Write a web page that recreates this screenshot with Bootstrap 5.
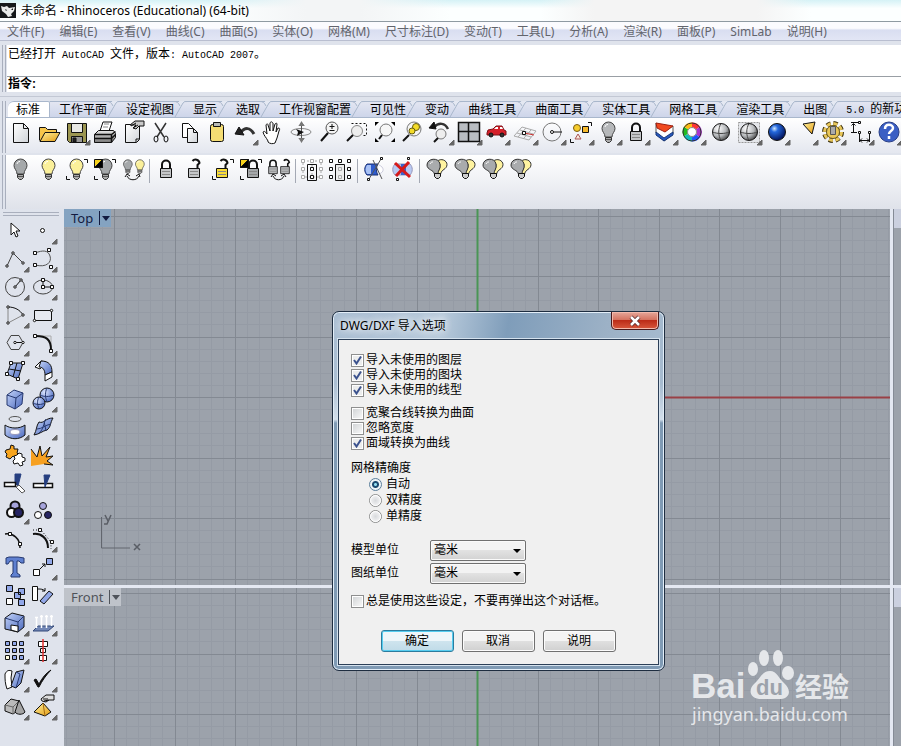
<!DOCTYPE html>
<html lang="zh-CN">
<head>
<meta charset="utf-8">
<meta name="viewport" content="width=device-width, initial-scale=1">
<title>未命名 - Rhinoceros (Educational) (64-bit)</title>
<link href="https://cdn.jsdelivr.net/npm/bootstrap@5.3.0/dist/css/bootstrap.min.css" rel="stylesheet">
<style>
  body { font: 12px/15px "Liberation Sans", "Noto Sans CJK SC", sans-serif; color: #000; background: #dfe3ec; }
  .ui-face { font-family: "Noto Sans", "Noto Sans CJK SC", sans-serif; }
  .half { font-family: "Liberation Mono", monospace; font-size: 10px; }
  .title-strip { height: 22px; background: linear-gradient(90deg, #fff0 0 24%, #f3f5f6 34% 40%, #fff0 50% 60%, #f4f4f4 66% 84%, #fff0 90%), linear-gradient(#d5f2f6, #fcffff 40%); border-bottom: 1px solid #8f9aa2; }
  .menu-strip { height: 19px; gap: 15px; padding-left: 7px; background: linear-gradient(#fbfbfe 0 35%, #d9def1 45%, #e2e6f5); border-bottom: 1px solid #b9bed0; }
  .menu-strip a { color: #62646c; text-decoration: none; }
  .grip-v { width: 4px; border: solid #a9afbd; border-width: 0 1px; margin: 0 1px 0 2px; flex: none; }
  .grip-h { height: 4px; border: solid #a9afbd; border-width: 1px 0; }
  .command { padding-top: 4px; height: 51px; }
  .history { height: 32px; border-bottom: 1px solid #999fa5; background: #fff; padding: 2px 0 0 1px; }
  .prompt-row { height: 15px; background: #fff; padding-left: 1px; }
  .prompt-row input { font: inherit; border: 0; outline: 0; min-width: 0; height: 13px; padding: 0; }
  .tabs { height: 17px; border-bottom: 1px solid #a9b7cc; background: #e0e4ee; padding-left: 2px; }
  .tabs button { font: inherit; height: 17px; border: 0; padding: 0 10px 0 9px; background: linear-gradient(#e3e6f2, #ccd4e9); border-top: 1px solid #a9b7cc; white-space: nowrap; position: relative; flex: none; color: #000; }
  .tabs button svg { position: absolute; left: -12px; top: -1px; width: 17px; height: 16px; }
  .tabs .active { background: #fff; padding: 0 9px 0 8px; border-right: 1px solid #a9b7cc; border-radius: 6px 2px 0 0; }
  .bar-one { height: 35px; background: linear-gradient(#fff, #e4e7ef); }
  .bar-two { height: 54px; background: linear-gradient(#fff, #dfe2ea); }
  .bars { padding-top: 4px; border-top: 1px solid #c3c8d4; }
  .bar-gap { margin-top: 2px; }
  .tool { width: 28px; height: 28px; padding: 0; border: 0; background: none; flex: none; display: block; }
  .tool svg { display: block; width: 28px; height: 28px; fill: none; stroke: #111; stroke-width: 1; overflow: visible; }
  .rule-v { width: 1px; height: 24px; background: #a4a9b4; margin: 0 2px 0 3px; flex: none; }
  .palette { width: 64px; padding: 3px 4px 0 1px; flex: none; }
  .palette .grip-h { margin: 0 1px 1px 2px; }
  .views { background: #e4e8f2; gap: 3px; }
  .view { background: #9ca2ab; position: relative; overflow: hidden; min-height: 0; }
  .view > svg.field { position: absolute; width: 100%; height: 100%; }
  .col-main { flex: 1 1 0; gap: 3px; min-width: 0; }
  .col-side { flex: 0 0 8px; gap: 3px; }
  .upper { flex: 376 1 0; }
  .lower { flex: 158 1 0; }
  .col-side .view { background: linear-gradient(#cbd0df 19px, #9ca2ab 0); box-shadow: inset 1px 0 0 #858b96; }
  .view-name { position: relative; height: 18px; border: 0; padding: 0 3px 0 7px; background: #84a3c1; color: #131b40; font-size: 13px; gap: 6px; }
  .view-name.idle { background: #bfc3ca; color: #4f535a; }
  .view-name i { border-left: 1px solid currentColor; height: 14px; width: 9px; }
  .view-name i::after { content: ""; display: block; border: solid transparent; border-width: 5px 4px 0; border-top-color: currentColor; margin: 5px 0 0 2px; }
  .ucs { position: absolute; left: 36px; bottom: 34px; }
  .brand { position: absolute; right: 35px; bottom: 17px; }
  .dlg { position: absolute; left: 332px; top: 102px; width: 333px; border: 1px solid #1e2d40; border-radius: 7px; padding: 0 5px 5px; background: linear-gradient(#fff0 0 20%, #d3dfeb 30%, #7f9ab4 31%, #7f9ab4 100%), linear-gradient(100deg, #a9bdd2 0, #b8cadb 28%, #7f9dba 45%, #9cb1c6 70%, #aec2d6); background-color: #9bb2c9; box-shadow: inset 0 0 0 1px #e3eef8; }
  .dlg-head { height: 27px; padding-left: 2px; }
  .dlg-head h1 { font-size: 12px; line-height: 15px; margin: 0; padding-right: 6px; text-shadow: 0 0 8px #fff, 0 0 8px #fff; }
  .shut { align-self: flex-start; width: 48px; height: 18px; padding: 0; border: 1px solid #4a1a1c; border-top: 0; border-radius: 0 0 5px 5px; background: linear-gradient(#e5a79a, #d4705d 48%, #bc2c18 50%, #d8583d); box-shadow: inset 0 0 0 1px #f3b9ab; line-height: 0; }
  .dlg-body { background: #f0f0f0; border: 1px solid #2c3f57; outline: 1px solid #d5e2ee; padding: 13px 13px 12px 12px; }
  .dlg-body fieldset { padding-top: 2px; margin-bottom: 16px; }
  .opt { height: 15px; gap: 2px; }
  .opt.pick { height: 16px; gap: 4px; padding-left: 18px; }
  .opt.remember { margin: 10px 0 21px; }
  .dlg .form-check-input { margin: 0; width: 13px; height: 13px; flex: none; box-shadow: none; border: 1px solid #8e8f8f; background-color: #eceded; background-size: contain; outline: 1px solid #fff; outline-offset: -2px; }
  .dlg .form-check-input[type=checkbox] { border-radius: 0; background-image: linear-gradient(135deg, #cfd2d4, #fbfbfb); }
  .dlg .form-check-input[type=checkbox]:checked { background-image: url("data:image/svg+xml,%3Csvg xmlns='http://www.w3.org/2000/svg' viewBox='0 0 11 11'%3E%3Cpath d='M2 5l2.500 3.500L9 1.500' fill='none' stroke='%233b528e' stroke-width='2'/%3E%3C/svg%3E"); }
  .dlg .form-check-input[type=radio] { background-image: radial-gradient(#d8dadd, #fff); }
  .dlg .form-check-input[type=radio]:checked { outline: 0; background-image: radial-gradient(circle, #8fdcf0 0 1px, #1b4a71 2px 3px, #eef4f8 4px); border-color: #5b7f9c; }
  .unit { gap: 31px; margin-bottom: 2px; }
  .dlg .form-select { width: 96px; height: 21px; font: inherit; padding: 0 16px 0 3px; border: 1px solid #707070; border-radius: 2px; color: #000; background: url("data:image/svg+xml,%3Csvg xmlns='http://www.w3.org/2000/svg' width='8' height='4'%3E%3Cpath d='M0 0h8L4 4z'/%3E%3C/svg%3E") no-repeat right 4px center / 8px 4px, linear-gradient(#f3f3f3 0 48%, #e2e2e2 50%, #d2d2d2); box-shadow: inset 0 0 0 1px #fafafa; }
  .push { width: 73px; height: 22px; font: inherit; padding: 0; color: #000; border: 1px solid #707070; border-radius: 3px; background: linear-gradient(#f4f4f4 0 48%, #e0e0e0 50%, #d0d0d0); box-shadow: inset 0 0 0 1px #fcfcfc; }
  .push.main { border-color: #2c7c9e; background: linear-gradient(#eef6fa 0 48%, #cfe4ee 50%, #c0dbe8); box-shadow: inset 0 0 0 1px #56cdf0; }
</style>
<script src="https://cdn.jsdelivr.net/npm/bootstrap@5.3.0/dist/js/bootstrap.bundle.min.js"></script>
</head>
<body class="d-flex flex-column vh-100 overflow-hidden">

<svg width="0" height="0" class="position-absolute" aria-hidden="true">
  <defs>
    <linearGradient id="gPage" x2="1" y2="1"><stop stop-color="#fff"/><stop offset="1" stop-color="#cfd3d8"/></linearGradient>
    <linearGradient id="gGold" x2="1" y2="1"><stop stop-color="#fff3a0"/><stop offset="1" stop-color="#e39a10"/></linearGradient>
    <linearGradient id="gBlue" x2="1" y2="1"><stop stop-color="#c5d5fa"/><stop offset="1" stop-color="#4a68bd"/></linearGradient>
    <linearGradient id="gSteel" x2="0" y2="1"><stop stop-color="#e8e8e8"/><stop offset="1" stop-color="#777"/></linearGradient>
    <radialGradient id="gBall" cx=".35" cy=".3" r=".8"><stop stop-color="#fff"/><stop offset=".55" stop-color="#b5b8bb"/><stop offset="1" stop-color="#333"/></radialGradient>
    <radialGradient id="gSea" cx=".35" cy=".3" r=".7"><stop stop-color="#cfe8ff"/><stop offset=".3" stop-color="#2468dd"/><stop offset="1" stop-color="#041660"/></radialGradient>
    <radialGradient id="gSky" cx=".35" cy=".3" r=".75"><stop stop-color="#dfe8ff"/><stop offset="1" stop-color="#4868c0"/></radialGradient>
    <symbol id="more" viewBox="0 0 28 28" overflow="visible"><path d="M28 22v5h-5z" fill="#666" stroke="#666"/></symbol>
    <symbol id="bulb" viewBox="0 0 28 28"><path d="M11 19C11 15 8 14 8 10.500a6.500 6.500 0 0 1 13 0C21 14 18 15 18 19z" stroke="#444"/><path d="M11.500 19.500h6v3l-2 2h-2l-2-2z" fill="#aaa" stroke="#333"/><path d="M12 21.500h5" stroke="#555"/><path d="M11 9c.5-2 1.500-2.500 3-2.500" stroke="#fff" fill="none"/></symbol>
    <symbol id="lock" viewBox="0 0 28 28"><path d="M10 14V9.500a4 4 0 0 1 8 0V14" fill="none" stroke-width="2"/><path d="M8.500 13.500h11v9h-11z"/><path d="M10 16.500h8M10 19.500h8" stroke="#888"/></symbol>
    <symbol id="unlock" viewBox="0 0 28 28"><path d="M17.500 14V10l2-2a4 4 0 0 0-7-2" fill="none" stroke-width="2"/><path d="M8.500 13.500h11v9h-11z"/><path d="M10 16.500h8M10 19.500h8" stroke="#888"/></symbol>
    <symbol id="brackets" viewBox="0 0 28 28"><path d="M22 4.500h3.500V8M4.500 21v3.500H8"/></symbol>
    <symbol id="half" viewBox="0 0 28 28"><path d="M4.500 4.500h8v8h-8z" fill="#f7d21c"/><path d="M12.500 4.500v8h-8z" fill="#000"/></symbol>
    <symbol id="duo" viewBox="0 0 28 28"><path d="M15 18.500c1-3 3-3 3-9l-3-3c4-4 10-1 10 3 0 5-6 5-6 9z" fill="#fff3a0" stroke="#333"/><path d="M12 18.500C12 15 5 15 5 10c0-7 12-8 13-1 1 5-2 6-2 9.500z" fill="#a9abad" stroke="#333"/><path d="M12.500 18.500h6v3l-2 2h-2l-2-2z" fill="#ccc"/><path d="M8 9c1-2 2-2 3-2" stroke="#fff"/></symbol>
    <symbol id="slash" viewBox="0 0 17 16"><path d="M7 0h8Q12 0 11 2L8 8z" fill="#e4e8f2"/><path d="M3 16L11 2Q12 0 16 .5M1 .5Q6 0 8 5" fill="none" stroke="#a9b7cc"/></symbol>
    <pattern id="mesh" width="121" height="121" patternUnits="userSpaceOnUse">
      <path fill="none" stroke="#959ba5" d="M12.500 0v121M24.500 0v121M36.500 0v121M48.500 0v121M73.500 0v121M85.500 0v121M97.500 0v121M109.500 0v121M0 12.500h121M0 24.500h121M0 36.500h121M0 48.500h121M0 73.500h121M0 85.500h121M0 97.500h121M0 109.500h121"/>
      <path fill="none" stroke="#838992" d="M.5 0v121M61.500 0v121M0 .5h121M0 61.500h121"/>
    </pattern>
  </defs>
</svg>

<header>
  <div class="title-strip ui-face d-flex align-items-center gap-1">
    <svg width="17" height="17" viewBox="0 0 17 17" aria-hidden="true"><path fill="#15191b" d="M0 1h16v15H0z"/><path fill="#e9eceb" d="M1 4l3 1 3-1 2 2 6-1-1 4-3 3 1 2-4 1-2-3-4-3z"/><path fill="#15191b" d="M5 7l2 1-1 1zM11 8l2-2v2z"/></svg>
    <span>未命名 - Rhinoceros (Educational) (64-bit)</span>
  </div>
  <nav class="menu-strip ui-face d-flex align-items-center text-nowrap overflow-hidden">
    <a href="#">文件(F)</a><a href="#">编辑(E)</a><a href="#">查看(V)</a><a href="#">曲线(C)</a><a href="#">曲面(S)</a><a href="#">实体(O)</a><a href="#">网格(M)</a><a href="#">尺寸标注(D)</a><a href="#">变动(T)</a><a href="#">工具(L)</a><a href="#">分析(A)</a><a href="#">渲染(R)</a><a href="#">面板(P)</a><a href="#">SimLab</a><a href="#">说明(H)</a>
  </nav>
</header>

<section class="command d-flex">
  <div class="grip-v"></div>
  <div class="flex-grow-1">
    <div class="history">已经打开<span class="half"> AutoCAD </span>文件，版本<span class="half">: AutoCAD 2007</span>。</div>
    <div class="prompt-row d-flex align-items-center"><label for="cmd" class="fw-bold">指令:</label><input id="cmd" class="flex-grow-1" type="text"></div>
  </div>
</section>

<section class="bars mt-1">
  <div class="d-flex overflow-hidden">
    <div class="grip-v me-0"></div>
    <div class="flex-grow-1 overflow-hidden">
      <div class="tabs d-flex overflow-hidden">
        <button class="active" type="button">标准</button>
        <button type="button">工作平面</button>
        <button type="button"><svg><use href="#slash"/></svg>设定视图</button>
        <button type="button"><svg><use href="#slash"/></svg>显示</button>
        <button type="button"><svg><use href="#slash"/></svg>选取</button>
        <button type="button"><svg><use href="#slash"/></svg>工作视窗配置</button>
        <button type="button"><svg><use href="#slash"/></svg>可见性</button>
        <button type="button"><svg><use href="#slash"/></svg>变动</button>
        <button type="button"><svg><use href="#slash"/></svg>曲线工具</button>
        <button type="button"><svg><use href="#slash"/></svg>曲面工具</button>
        <button type="button"><svg><use href="#slash"/></svg>实体工具</button>
        <button type="button"><svg><use href="#slash"/></svg>网格工具</button>
        <button type="button"><svg><use href="#slash"/></svg>渲染工具</button>
        <button type="button"><svg><use href="#slash"/></svg>出图</button>
        <button type="button"><svg><use href="#slash"/></svg><span class="half">5.0 </span>的新功能</button>
      </div>
      <div class="bar-one d-flex overflow-hidden">
        <button class="tool" aria-label="新建"><svg><path d="M7.500 5.500h10l5 5v14h-15z" fill="url(#gPage)"/><path d="M17.500 5.500v5h5"/></svg></button>
        <button class="tool" aria-label="打开"><svg><path d="M5.500 22.500v-13h6l2 2h9v3" fill="#f7c64a"/><path d="M6 23.500l5-9h15l-5 9z" fill="url(#gGold)"/></svg></button>
        <button class="tool" aria-label="保存"><svg><path d="M5.500 5.500h19v19h-17l-2-2z" fill="#9c9651"/><path d="M9.500 5.500h11v9h-11z" fill="#e8e8e4"/><path d="M9.500 18.500h11v6h-11z" fill="#999"/><path d="M11 20h3v4h-3z" fill="#222"/><use href="#more"/></svg></button>
        <button class="tool" aria-label="打印"><svg><path d="M10 13l3-9h9l-3 9z" fill="#fff"/><path d="M4.500 16.500l4-4h15l2 3v4l-4 5h-17z" fill="url(#gSteel)"/><path d="M4.500 16.500h17l4-3M4.500 20.500h17l4-4M21.500 16.500v8" stroke-width="1.500"/><path d="M14 6h5M13 9h5" stroke="#888"/></svg></button>
        <button class="tool" aria-label="文件属性"><svg><path d="M7.500 6.500h14v15l-3 3h-11z" fill="url(#gPage)"/><path d="M21 21h-3v3"/><path d="M12 7l5-4h9v5h-5l-3 3-3-1 3-3z" fill="#c9c9c9"/><path d="M13 8l5-3M15 10l5-3"/></svg></button>
        <button class="tool" aria-label="剪切"><svg><path d="M9 5l9 14M20 5l-9 14" stroke="#333" stroke-width="1.500"/><ellipse cx="10" cy="21" rx="2" ry="3"/><ellipse cx="20" cy="21" rx="2" ry="3"/></svg></button>
        <button class="tool" aria-label="复制"><svg><path d="M8.500 5.500h6l4 4v10h-10z" fill="#fff"/><path d="M13.500 10.500h6l4 4v10h-10z" fill="url(#gPage)"/><path d="M19.500 10.500v4h4"/></svg></button>
        <button class="tool" aria-label="粘贴"><svg><rect x="8.500" y="6.500" width="13" height="17" rx="2" fill="#f5dd73"/><path d="M11.500 4.500h7v4h-7z" fill="#b9bbb6"/></svg></button>
        <button class="tool" aria-label="撤销"><svg><path d="M10 15c5-6 10-6 14 1" stroke="#333" stroke-width="3"/><path d="M5 16l4-7 5 8z" fill="#222"/><use href="#more"/></svg></button>
        <button class="tool" aria-label="平移"><svg><path d="M10 23c-2-4-4-5-5-9 1-1 2-1 4 2L8 7c1-2 2-1 2 0l2 6V5c1-2 2-1 3 0v8l2-7c1-1 2-1 2 0l-1 8 2-4c2 0 2 1 1 3l-2 7-2 5c-2 1-5 1-7-1z" fill="#fff"/></svg></button>
        <button class="tool" aria-label="旋转视图"><svg><ellipse cx="15" cy="14" rx="10" ry="3.500" stroke="#888"/><path d="M13 8c2-3 4-3 5 0M13 20c2 3 4 3 5 0M15.500 6v16" stroke="#555"/><path d="M15.500 3l-3 5h6zM15.500 25l-3-5h6z" fill="#777" stroke="none"/><path d="M10 11l8 3-7 4 1-4z" fill="#111" stroke="none"/></svg></button>
        <button class="tool" aria-label="动态缩放"><svg><circle cx="18" cy="10" r="6" fill="#f4f4f4" stroke="#555"/><path d="M14 15l-7 8" stroke-width="2"/><path d="M15.500 8.500h5M18 6v5M15.500 12.500h5"/></svg></button>
        <button class="tool" aria-label="框选缩放"><svg><path d="M9.500 5.500h15v12h-4" stroke-dasharray="2 2"/><circle cx="15" cy="13" r="5.500" fill="#eee" stroke="#888"/><path d="M11 17l-6 6" stroke-width="2"/></svg></button>
        <button class="tool" aria-label="缩放至最大范围"><svg><circle cx="16" cy="12" r="6" fill="#f7f7f7" stroke="#777"/><path d="M12 17l-3 4" stroke-width="2"/><path d="M5 4h4L5 8zM25 4h-4l4 4zM5 24h4l-4-4zM25 24h-4l4-4z" fill="#000" stroke="none"/></svg></button>
        <button class="tool" aria-label="缩放至选取物件"><svg><circle cx="16" cy="11" r="7" fill="#f4f4f4" stroke="#777"/><circle cx="18" cy="9" r="3.500" fill="#f4dc28" stroke="#665c10"/><circle cx="14" cy="13" r="3" fill="#f4dc28" stroke="#665c10"/><path d="M11 17l-6 6" stroke-width="2"/></svg></button>
        <button class="tool" aria-label="复原视图"><svg><path d="M8 9c5-5 11-4 14 2" stroke="#333" stroke-width="2.500"/><path d="M3 10l5-6 2 7z" fill="#111"/><circle cx="15" cy="16" r="5" fill="#eee" stroke="#777"/><path d="M12 20l-4 4" stroke-width="2"/><use href="#more"/></svg></button>
        <button class="tool" aria-label="四个视窗"><svg><path d="M4.500 4.500h21v19h-21z" fill="#b9bdc2" stroke-width="1.500"/><path d="M14.500 5v18M5 13.500h20" stroke-width="1.500"/><use href="#more"/></svg></button>
        <button class="tool" aria-label="车辆视图"><svg><path d="M5 15l1-3 5-1 3-3h6l2 4 2 1v4H5z" fill="#d5202a" stroke="#801016"/><path d="M12 11l2-2h2v2zM18 9h2l1 2h-3z" fill="#fff" stroke="none"/><circle cx="9" cy="17" r="2" fill="#333"/><circle cx="20" cy="17" r="2" fill="#333"/><use href="#more"/></svg></button>
        <button class="tool" aria-label="工作平面"><svg><path d="M4 18l8-9 14 4-7 9zM7 15l14 4M10 12l13 4M16 10l-8 9M21 12l-7 8" stroke="#aaa"/><path d="M14 15l10 2" stroke="#c33"/><path d="M12.500 13.500h3v3h-3z" fill="#fff"/><use href="#more"/></svg></button>
        <button class="tool" aria-label="圆"><svg><circle cx="14" cy="14" r="9" stroke="#777"/><path d="M14 14h10"/><circle cx="14" cy="14" r="1.500" fill="#fff"/><use href="#more"/></svg></button>
        <button class="tool" aria-label="选取"><svg><use href="#brackets"/><circle cx="11" cy="10" r="3.500" fill="#f6cc2c" stroke="#7a5c10"/><path d="M16.500 8.500h6v6h-6z" fill="#f6b92c"/><path d="M12 16l3 5H9z" stroke="#a55" fill="#f8e8dc"/><use href="#more"/></svg></button>
        <button class="tool" aria-label="隐藏"><svg><use href="#bulb" fill="#b6b8ba"/><use href="#more"/></svg></button>
        <button class="tool" aria-label="锁定"><svg><use href="#lock" fill="#c4c6c8"/><use href="#more"/></svg></button>
        <button class="tool" aria-label="图层"><svg><path d="M6 5l9 7 8-4v8l-9 7-8-8z" fill="#fff" stroke="#555"/><path d="M6 5l17 3-8 6-8-4z" fill="#f04a20" stroke="#a02010"/><path d="M6 14l8 6 9-6v3l-9 6-8-6z" fill="#2858c0" stroke="#183878"/><use href="#more"/></svg></button>
        <button class="tool" aria-label="颜色"><svg><g stroke-width="5"><path d="M14 7a7 7 0 0 1 6 3" stroke="#f33"/><path d="M20 10a7 7 0 0 1 0 8" stroke="#a3c"/><path d="M20 18a7 7 0 0 1-6 3" stroke="#25f"/><path d="M14 21a7 7 0 0 1-6-4" stroke="#1bb"/><path d="M8 17a7 7 0 0 1 0-7" stroke="#2b2"/><path d="M8 10a7 7 0 0 1 6-3" stroke="#fb1"/></g><circle cx="14" cy="14" r="9" stroke="#333"/><circle cx="14" cy="14" r="4.500" fill="#fff" stroke="#888"/><use href="#more"/></svg></button>
        <button class="tool" aria-label="着色"><svg><circle cx="15" cy="14" r="8.500" fill="url(#gBall)"/><path d="M15 5.500c-3 5-3 12 0 17M6.500 14c5 2 12 2 17 0" stroke="#444"/></svg></button>
        <button class="tool" aria-label="着色全部"><svg><path d="M4.500 4.500h21v20h-21z" stroke="#999" stroke-dasharray="2 1" fill="#e4e6ea"/><circle cx="15" cy="14" r="8.500" fill="url(#gBall)"/><path d="M15 5.500c-3 5-3 12 0 17M6.500 14c5 2 12 2 17 0" stroke="#444"/><use href="#more"/></svg></button>
        <button class="tool" aria-label="渲染"><svg><circle cx="15" cy="14" r="8.500" fill="url(#gSea)"/><use href="#more"/></svg></button>
        <button class="tool" aria-label="灯光"><svg><path d="M13 6l12-2-3 12z" fill="url(#gGold)"/><use href="#more"/></svg></button>
        <button class="tool" aria-label="选项"><svg><circle cx="15" cy="14" r="8.500" stroke-width="5" stroke-dasharray="4 2.700" stroke="#3d3210"/><circle cx="15" cy="14" r="8.500" stroke="#e8c658" stroke-width="3" stroke-dasharray="4 2.700"/><circle cx="15" cy="14" r="6.500" fill="#e8c658" stroke="#6b5a1c"/><path d="M12.500 8.500h5v8h-5z" fill="#aaa" stroke="#555"/><use href="#more"/></svg></button>
        <button class="tool" aria-label="尺寸标注"><svg><path d="M5 4.500h8M5 14.500h6M7.500 6v8M5.500 7.500l2-2 2 2M13.500 14v10M23.500 14v10M14 22.500h9M16 20.500l-2 2 2 2M21 20.500l2 2-2 2"/><path d="M12.500 3.500h2v2h-2zM12.500 13.500h2v2h-2zM22.500 13.500h2v2h-2z" fill="#fff"/><use href="#more"/></svg></button>
        <button class="tool" aria-label="说明"><svg><circle cx="15" cy="14" r="10" fill="#3b5fc4" stroke="#2a3f86"/><path d="M11 11c0-6 8-5 8-1 0 3-4 3-4 6M15 18v3" stroke="#fff" stroke-width="2.500"/><use href="#more"/></svg></button>
      </div>
    </div>
  </div>
  <div class="bar-gap d-flex overflow-hidden">
    <div class="grip-v me-0"></div>
    <div class="bar-two d-flex flex-grow-1 overflow-hidden">
      <button class="tool" aria-label="隐藏物件"><svg><use href="#bulb" fill="#a5a8aa"/></svg></button>
      <button class="tool" aria-label="显示物件"><svg><use href="#bulb" fill="#fbf09a"/></svg></button>
      <button class="tool" aria-label="显示选取的物件"><svg><use href="#bulb" fill="#fbf09a"/><use href="#brackets"/></svg></button>
      <button class="tool" aria-label="隐藏未选取的物件"><svg><use href="#bulb" x="1" fill="#a5a8aa"/><use href="#brackets"/><use href="#half"/></svg></button>
      <button class="tool" aria-label="对调隐藏与显示"><svg><use href="#bulb" x="0" y="2" width="19" height="19" fill="#a5a8aa"/><use href="#bulb" x="12" y="2" width="19" height="19" fill="#fbf09a"/><path d="M9 21c2 5 10 5 12 0M7 22l2-3 3 2M18 21l3-2 1 3"/></svg></button>
      <div class="rule-v mt-1"></div>
      <button class="tool" aria-label="锁定物件"><svg><use href="#lock" fill="#c4c6c8"/></svg></button>
      <button class="tool" aria-label="解除锁定"><svg><use href="#unlock" fill="#c4c6c8"/></svg></button>
      <button class="tool" aria-label="解除选取锁定"><svg><use href="#unlock" fill="#f8dc38"/><use href="#brackets"/></svg></button>
      <button class="tool" aria-label="锁定未选取的物件"><svg><use href="#lock" x="3" fill="#a5a8aa"/><use href="#brackets"/><use href="#half"/></svg></button>
      <button class="tool" aria-label="对调锁定"><svg><use href="#lock" x="-2" y="1" width="22" height="22" fill="#b8babc"/><use href="#unlock" x="10" y="1" width="22" height="22" fill="#b8babc"/><path d="M9 21c2 5 9 5 11 0M7 22l2-3 3 2M17 21l3-2 2 3"/></svg></button>
      <div class="rule-v mt-1"></div>
      <button class="tool" aria-label="显示控制点"><svg><path d="M5 6h18v16H5zM14 6v16" stroke="#aaa" stroke-dasharray="2 2"/><path d="M3.500 4.500h3v3h-3zM12.500 4.500h3v3h-3zM21.500 4.500h3v3h-3zM3.500 20.500h3v3h-3zM21.500 20.500h3v3h-3zM3.500 12.500h3v3h-3zM21.500 12.500h3v3h-3z" stroke="#aaa" fill="#fff"/><path d="M9.500 9.500h9v16h-9z"/><path d="M12.500 12.500h3v3h-3zM12.500 20.500h3v3h-3z" fill="#fff"/></svg></button>
      <button class="tool" aria-label="隐藏控制点"><svg><path d="M9.500 9.500h9v16h-9z" fill="#eee"/><path d="M12.500 12.500h3v3h-3zM12.500 20.500h3v3h-3z" stroke="#aaa"/><path d="M3.500 4.500h3v3h-3zM12.500 4.500h3v3h-3zM21.500 4.500h3v3h-3zM3.500 20.500h3v3h-3zM21.500 20.500h3v3h-3zM3.500 12.500h3v3h-3zM21.500 12.500h3v3h-3z" fill="#fff"/></svg></button>
      <div class="rule-v mt-1"></div>
      <button class="tool" aria-label="显示边缘"><svg><path d="M7 9h11c-2 3-2 8 0 11H7c-3-3-3-8 0-11z" fill="#2f5ccc" stroke="#1a2f70"/><path d="M7 10h4v9H7c-2-3-2-6 0-9z" fill="#a9c2f5" stroke="none"/><path d="M19 10c5 2 6 7 0 9" fill="#fff" stroke="#ccd"/><path d="M21 4L9 24M13 5l9 19" stroke="#555"/><path d="M20.500 2.500h2v2h-2zM7.500 23.500h2v2h-2z" fill="#fff"/></svg></button>
      <button class="tool" aria-label="隐藏边缘"><svg><path d="M7 9h15c3 3 3 8 0 11H7c-3-3-3-8 0-11z" fill="#b9caf3" stroke="#99b"/><path d="M13 9h5v11h-5z" fill="#3a62cc" stroke="none"/><path d="M7 8l15 14M21 7L8 21" stroke="#d61a1a" stroke-width="3"/><path d="M19.500 2.500h2v2h-2zM8.500 23.500h2v2h-2z" fill="#fff"/></svg></button>
      <div class="rule-v mt-1"></div>
      <button class="tool" aria-label="隐藏点"><svg><use href="#duo"/></svg></button>
      <button class="tool" aria-label="显示点"><svg><use href="#duo"/></svg></button>
      <button class="tool" aria-label="隐藏曲线"><svg><use href="#duo"/></svg></button>
      <button class="tool" aria-label="隐藏曲面"><svg><use href="#duo"/></svg></button>
    </div>
  </div>
</section>

<main class="d-flex flex-grow-1 position-relative overflow-hidden">
  <aside class="palette">
    <div class="grip-h"></div>
    <div class="d-flex flex-wrap">
      <button class="tool" aria-label="选取"><svg><path d="M10 6v12l3-3 2 5 2-1-2-5h4z" fill="#fff"/></svg></button>
      <button class="tool" aria-label="点"><svg><circle cx="13.500" cy="13.500" r="2" fill="#fff"/><use href="#more"/></svg></button>
      <button class="tool" aria-label="多重直线"><svg><path d="M6 21l6-13 10 10" stroke="#444"/><g fill="#fff"><circle cx="6" cy="21" r="1.200"/><circle cx="12" cy="8" r="1.200"/><circle cx="22" cy="18" r="1.200"/></g><use href="#more"/></svg></button>
      <button class="tool" aria-label="曲线"><svg><path d="M6 8c8-3 13-3 15 3s-3 12-15 9" stroke="#555"/><path d="M4.500 6.500h3v3h-3zM18.500 3.500h3v3h-3zM4.500 18.500h3v3h-3zM20.500 20.500h3v3h-3z" fill="#fff"/><use href="#more"/></svg></button>
      <button class="tool" aria-label="圆"><svg><circle cx="14" cy="14" r="9.500" stroke="#444"/><path d="M14 14l6-7"/><g fill="#fff"><circle cx="14" cy="14" r="1.200"/><circle cx="20" cy="7" r="1.200"/></g><use href="#more"/></svg></button>
      <button class="tool" aria-label="椭圆"><svg><ellipse cx="14" cy="14" rx="9.500" ry="7" stroke="#444"/><path d="M14 7v7h9"/><path d="M12.500 5.500h3v3h-3zM12.500 12.500h3v3h-3zM21.500 12.500h3v3h-3z" fill="#fff"/><use href="#more"/></svg></button>
      <button class="tool" aria-label="圆弧"><svg><path d="M7 6v16l15-8" stroke="#888"/><path d="M7 6c7 0 12 3 15 8"/><g fill="#fff"><circle cx="7" cy="6" r="1.200"/><circle cx="7" cy="22" r="1.200"/><circle cx="22" cy="14" r="1.200"/></g><use href="#more"/></svg></button>
      <button class="tool" aria-label="矩形"><svg><path d="M5.500 9.500h17v10h-17z" fill="#e6e9f0"/><g fill="#fff"><circle cx="22.500" cy="9.500" r="1.200"/><circle cx="5.500" cy="19.500" r="1.200"/></g><use href="#more"/></svg></button>
      <button class="tool" aria-label="多边形"><svg><path d="M6 13.500l4-7h8l4 7-4 7h-8z" stroke="#444"/><path d="M14 13.500h8"/><g fill="#fff"><circle cx="14" cy="13.500" r="1.200"/><circle cx="22" cy="13.500" r="1.200"/></g><use href="#more"/></svg></button>
      <button class="tool" aria-label="曲线圆角"><svg><path d="M7 7h15v14" stroke="#aaa"/><path d="M7 7c10 0 15 3 15 14" stroke-width="2"/><path d="M4.500 5.500h3v3h-3zM20.500 20.500h3v3h-3z" fill="#fff"/><use href="#more"/></svg></button>
      <button class="tool" aria-label="曲面"><svg><path d="M10 6h12l-5 16-11-5z" fill="url(#gBlue)"/><path d="M16 6l-4 14M8 12l12 2"/><path d="M8.500 4.500h3v3h-3zM20.500 4.500h3v3h-3zM15.500 20.500h3v3h-3zM4.500 15.500h3v3h-3z" fill="#fff"/><use href="#more"/></svg></button>
      <button class="tool" aria-label="扫掠"><svg><path d="M6 10l6-6 5 1-6 7z" fill="#fff"/><path d="M12 4c8 0 11 4 11 11l-7 3c0-5-2-8-6-8z" fill="url(#gBlue)"/><path d="M16 18l7-3v5l-7 4z" fill="#fff"/><use href="#more"/></svg></button>
      <button class="tool" aria-label="立方体"><svg><path d="M6 10l7-5 9 3-1 11-7 5-8-4z" fill="url(#gBlue)" stroke="#26386f"/><path d="M6 10l9 3 7-5M15 13l-1 11" stroke="#26386f"/><use href="#more"/></svg></button>
      <button class="tool" aria-label="布尔运算"><svg><circle cx="18" cy="10" r="7" fill="url(#gSky)"/><circle cx="10" cy="18" r="6" fill="url(#gSky)"/><path d="M18 3c-2 4-2 9 0 14M11 10c4 2 9 2 14 0M10 12c-2 4-2 7 0 12M4 18c4 2 8 2 12 0" stroke="#26386f"/><use href="#more"/></svg></button>
      <button class="tool" aria-label="投影"><svg><ellipse cx="14" cy="6" rx="6" ry="2.500" stroke="#555"/><path d="M4 12c5 4 15 4 20 0v10c-6 5-14 5-20 0z" fill="url(#gBlue)"/><ellipse cx="14" cy="19" rx="5" ry="2.500" fill="#fff" stroke="#99b"/><use href="#more"/></svg></button>
      <button class="tool" aria-label="曲面工具"><svg><path d="M10 9c5 2 6-4 14-4-3 5-2 9-6 12-5 1-7 4-13 5 3-5 2-9 5-13z" fill="url(#gBlue)"/><path d="M17 6c-3 5-2 10-7 14M8 16c5 0 8-4 14-5M15 8l2 10" stroke="#26386f"/><use href="#more"/></svg></button>
      <button class="tool" aria-label="组合"><svg><path d="M5 9l4-1 1-4 3 1v3h4l-1 4 2 2-3 3-3-2-3 3-4-2 1-3-2-2z" fill="#f8a51e"/><path d="M13 15l3-1 2-2 3 1v3l3 1v3l-3 1 1 3-3 1-2-3-4 1-1-3 2-2z" fill="#fff"/></svg></button>
      <button class="tool" aria-label="炸开"><svg><path d="M2 25V8l6 8 3-11 2 10 8-9-4 10 7-1-6 5 6 4-9-1z" fill="#f6a021" stroke="none"/><path d="M2 8l6 8 3-11 2 10 8-9-4 10 7-1-6 5 6 4-9-1"/></svg></button>
      <button class="tool" aria-label="修剪"><svg><path d="M14 5h6l-3 12-3-3z" fill="#263f80" stroke="#263f80"/><path d="M3.500 13.500h11v4h-11z" fill="#fff" stroke-width="1.500"/><path d="M15 18l3-2 6 6-3 2z" fill="#fff" stroke="#555"/></svg></button>
      <button class="tool" aria-label="分割"><svg><path d="M4.500 14.500h19v4h-19z" fill="#fff" stroke-width="1.500"/><path d="M15 6h6l-5 12z" fill="#263f80" stroke="#263f80"/></svg></button>
      <button class="tool" aria-label="群组"><svg><circle cx="14" cy="9" r="4.500" fill="#a6a4db" stroke-width="2"/><circle cx="10.500" cy="15.500" r="4.500" fill="#fff" stroke-width="2"/><circle cx="17.500" cy="15.500" r="4.500" fill="#262563" stroke-width="2"/><use href="#more"/></svg></button>
      <button class="tool" aria-label="解散群组"><svg><circle cx="14" cy="9" r="3.500" fill="#a6a4db"/><circle cx="9" cy="18" r="3.500" fill="#fff"/><circle cx="19" cy="18" r="3.500" fill="#262563"/></svg></button>
      <button class="tool" aria-label="编辑点"><svg><path d="M4 9c8-1 15 4 15 14" stroke-width="1.500"/><path d="M7.500 7.500h3v3h-3zM17.500 17.500h3v3h-3z" fill="#fff"/></svg></button>
      <button class="tool" aria-label="控制点"><svg><path d="M4 9c8-1 15 4 15 14" stroke-width="2"/><path d="M4 5h8l10 12v7" stroke-dasharray="1 2"/><path d="M9.500 3.500h3v3h-3zM21.500 15.500h3v3h-3z" fill="#fff"/><use href="#more"/></svg></button>
      <button class="tool" aria-label="文字"><svg><path d="M5 5l3-1h9l6 1v5h-3l-2-2h-2v12l3 2v2h-9v-2l2-2V8H9l-2 3H5z" fill="#5f80d0" stroke="#26386f"/></svg></button>
      <button class="tool" aria-label="移动"><svg><path d="M4.500 16.500h6v6h-6z" fill="#fff"/><path d="M17.500 5.500h6v6h-6z" fill="#91a7e8"/><path d="M11 16l5-5M13 11h3v3"/><use href="#more"/></svg></button>
      <button class="tool" aria-label="复制物件"><svg><path d="M5.500 4.500h6v6h-6zM17.500 7.500h6v6h-6zM13.500 11.500h6v6h-6zM17.500 18.500h6v6h-6z" fill="#91a7e8"/><path d="M5.500 17.500h6v6h-6z" fill="#fff"/></svg></button>
      <button class="tool" aria-label="旋转"><svg><path d="M3.500 5.500h5v14h-5z" fill="#fff"/><path d="M11 20l9-10 4 3-9 10z" fill="#91a7e8"/><path d="M9 8c3 0 5 0 7 2M16 7v3h-3"/></svg></button>
      <button class="tool" aria-label="实体编辑"><svg><path d="M4 9l7-5 12 3v11l-6 5-13-3z" fill="url(#gBlue)"/><path d="M4 9l13 4 6-6M17 13v10" stroke="#26386f"/><path d="M10 16l7 1v6l-7-2z" fill="#fff"/><use href="#more"/></svg></button>
      <button class="tool" aria-label="法线方向"><svg><path d="M4 22l5-5h16l-6 5z" fill="#7186b5" stroke="#334878"/><path d="M7.500 19V8M12.500 19V6M17.500 19V6M22.500 17V6M6 8.500h3M11 7.500h3M16 7.500h3M21 7.500h3" stroke="#fff" stroke-width="1.500"/><use href="#more"/></svg></button>
      <button class="tool" aria-label="阵列"><svg><path d="M4.500 4.500h4v4h-4zM11.500 4.500h4v4h-4zM18.500 4.500h4v4h-4zM4.500 11.500h4v4h-4zM11.500 11.500h4v4h-4zM18.500 11.500h4v4h-4zM11.500 18.500h4v4h-4zM18.500 18.500h4v4h-4z" fill="#91a7e8"/><path d="M4.500 18.500h4v4h-4z" fill="#fffde0"/><use href="#more"/></svg></button>
      <button class="tool" aria-label="对齐"><svg><path d="M9.500 4.500h9v5h-9zM11.500 11.500h5v4h-5zM10.500 18.500h7v5h-7z" fill="#fff"/><path d="M14 2v23" stroke="#e03030" stroke-width="1.500"/><use href="#more"/></svg></button>
      <button class="tool" aria-label="弯曲"><svg><path d="M4 9c2-4 4-4 7-3l-1 7 1 9-5 2c-2-6-2-9-2-15z" fill="#fff"/><path d="M15 7l8-2-3 13-5 5-5-2z" fill="url(#gBlue)"/><path d="M15 7l4 2-4 14" stroke="#26386f"/><use href="#more"/></svg></button>
      <button class="tool" aria-label="检查"><svg><path d="M5 15l2-1 3 5C13 13 17 8 22 5 17 10 13 16 10 22H9z" fill="#111"/><use href="#more"/></svg></button>
      <button class="tool" aria-label="网格"><svg><path d="M4 12l6-6 8 2v9l-6 4-8-3z" fill="#bbb"/><path d="M4 12l8 2 6-6M12 14v7" stroke="#666"/><path d="M18 7l6 12c-2 3-8 3-10 0z" fill="#a5a5a5"/><use href="#more"/></svg></button>
      <button class="tool" aria-label="属性"><svg><path d="M5 19l9-9 8 9-6 4z" fill="url(#gGold)"/><path d="M14 10l2 13" stroke="#a66a10"/><path d="M12 6l5-4h8v5h-5l-3 2-4-1z" fill="#ddd"/><path d="M14 6h5M15 8l5-1"/><use href="#more"/></svg></button>
    </div>
  </aside>

  <div class="views d-flex flex-grow-1">
    <div class="col-main d-flex flex-column">
      <section class="view upper">
        <svg class="field" aria-hidden="true"><svg x="50%" y="50%" overflow="visible"><path d="M-1210-1210h2420v2420h-2420z" fill="url(#mesh)"/><path d="M0 .5h1210" stroke="#9a4046" stroke-width="2"/><path d="M.5 0v-1210" stroke="#4a9556" stroke-width="2"/></svg></svg>
        <button class="view-name ui-face d-flex align-items-center" type="button">Top<i></i></button>
        <svg class="ucs" width="42" height="46" aria-hidden="true"><path d="M1.500 12v31H30" fill="none" stroke="#62666e"/><path d="M5 10l3 6M11 10L7 19H4M34 39l6 6M40 39l-6 6" fill="none" stroke="#5a5e66" stroke-width="1.500"/></svg>
      </section>
      <section class="view lower">
        <svg class="field" aria-hidden="true"><svg x="50%" y="5" overflow="visible"><path d="M-1210-1210h2420v2420h-2420z" fill="url(#mesh)"/><path d="M.5-10v1210" stroke="#4a9556" stroke-width="2"/></svg></svg>
        <button class="view-name idle ui-face d-flex align-items-center" type="button">Front<i></i></button>
        <svg class="brand" width="164" height="80" fill="#e5e7ea" role="img" aria-label="Baidu 经验">
          <text x="0" y="49" font-family="Liberation Sans" font-weight="700" font-size="35">Bai</text>
          <ellipse cx="62" cy="20" rx="5" ry="7"/><ellipse cx="73" cy="9" rx="5" ry="8"/><ellipse cx="87" cy="9" rx="5" ry="8"/><ellipse cx="97" cy="24" rx="6" ry="7"/>
          <path d="M79 22c7 0 9 8 14 12 7 6 7 15-3 16-6 0-16 0-22 0-9-1-11-9-5-15 6-5 8-13 16-13z"/>
          <text x="65" y="46" font-family="Liberation Sans" font-weight="700" font-size="22" fill="#9ca2ab">du</text>
          <text x="104" y="48" font-family="Noto Sans CJK SC" font-weight="700" font-size="27">经验</text>
          <text x="1" y="72" font-family="Noto Sans" font-size="18">jingyan.baidu.com</text>
        </svg>
      </section>
    </div>
    <div class="col-side d-flex flex-column">
      <section class="view upper"></section>
      <section class="view lower"></section>
    </div>
  </div>

  <form class="dlg" role="dialog" aria-labelledby="dlgTitle">
    <div class="dlg-head d-flex align-items-center justify-content-between">
      <h1 id="dlgTitle" class="ui-face fw-normal">DWG/DXF 导入选项</h1>
      <button class="shut" type="button" aria-label="关闭"><svg width="14" height="12" viewBox="0 0 14 12"><path d="M3 2l8 8M11 2l-8 8" stroke="#54272a" stroke-width="4"/><path d="M3 2l8 8M11 2l-8 8" stroke="#fff" stroke-width="2.500"/></svg></button>
    </div>
    <div class="dlg-body">
      <div class="opt d-flex align-items-center"><input class="form-check-input" type="checkbox" id="c1" checked><label for="c1">导入未使用的图层</label></div>
      <div class="opt d-flex align-items-center"><input class="form-check-input" type="checkbox" id="c2" checked><label for="c2">导入未使用的图块</label></div>
      <div class="opt d-flex align-items-center mb-2"><input class="form-check-input" type="checkbox" id="c3" checked><label for="c3">导入未使用的线型</label></div>
      <div class="opt d-flex align-items-center"><input class="form-check-input" type="checkbox" id="c4"><label for="c4">宽聚合线转换为曲面</label></div>
      <div class="opt d-flex align-items-center"><input class="form-check-input" type="checkbox" id="c5"><label for="c5">忽略宽度</label></div>
      <div class="opt d-flex align-items-center mb-2"><input class="form-check-input" type="checkbox" id="c6" checked><label for="c6">面域转换为曲线</label></div>
      <fieldset aria-labelledby="meshLabel">
        <div id="meshLabel">网格精确度</div>
        <div class="opt pick d-flex align-items-center"><input class="form-check-input" type="radio" name="mesh" id="r1" checked><label for="r1">自动</label></div>
        <div class="opt pick d-flex align-items-center"><input class="form-check-input" type="radio" name="mesh" id="r2"><label for="r2">双精度</label></div>
        <div class="opt pick d-flex align-items-center"><input class="form-check-input" type="radio" name="mesh" id="r3"><label for="r3">单精度</label></div>
      </fieldset>
      <div class="unit d-flex align-items-center"><label for="s1">模型单位</label><select class="form-select" id="s1"><option>毫米</option></select></div>
      <div class="unit d-flex align-items-center"><label for="s2">图纸单位</label><select class="form-select" id="s2"><option>毫米</option></select></div>
      <div class="opt remember d-flex align-items-center"><input class="form-check-input" type="checkbox" id="c7"><label for="c7">总是使用这些设定，不要再弹出这个对话框。</label></div>
      <div class="d-flex justify-content-center gap-2"><button class="push main" type="submit">确定</button><button class="push" type="button">取消</button><button class="push" type="button">说明</button></div>
    </div>
  </form>
</main>
</body>
</html>
